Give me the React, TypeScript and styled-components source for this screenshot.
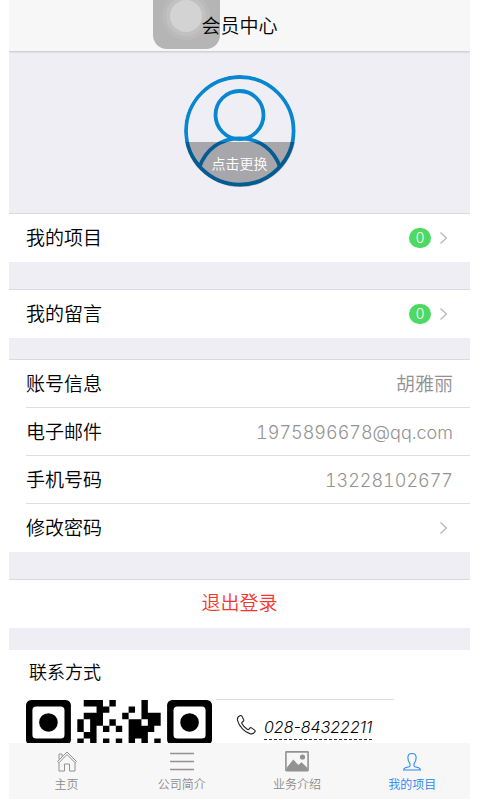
import React from "react";
import styled, { createGlobalStyle } from "styled-components";

const GlobalStyle = createGlobalStyle`
  * { box-sizing: border-box; }
  body {
    margin: 0;
    background: #fff;
    color: #000;
    font-family: Inter, "Noto Sans CJK SC", sans-serif;
    font-weight: 350;
  }
  button { font: inherit; color: inherit; background: none; border: 0; padding: 0; }
  a { color: inherit; text-decoration: none; }
  svg { display: block; flex: none; }
`;

const Page = styled.div`
  height: 100vh;
  padding: 0 10px 1px 9px;
  display: flex;
  flex-direction: column;
`;

const Header = styled.header`
  position: relative;
  z-index: 1;
  flex: none;
  height: 51px;
  display: flex;
  justify-content: center;
  background: #f7f7f7;
  box-shadow: 0 1px 2px #c4c4c6;
  clip-path: inset(0 0 -4px 0);
`;

const Title = styled.h1`
  position: relative;
  margin: 0;
  padding-top: 13px;
  font-size: 19px;
  line-height: 28px;
  font-weight: inherit;
`;

const AssistiveTouch = styled.button`
  position: absolute;
  top: -18px;
  left: calc(50% - 87px);
  width: 67px;
  height: 67px;
  border-radius: 14px;
  background: #b5b5b5;
  display: grid;
  place-items: center;
`;

const Content = styled.main`
  flex: 1;
  min-height: 0;
  overflow: hidden;
  background: #efeef4;
`;

const Profile = styled.section`
  height: 162px;
  padding-top: 24px;
  display: flex;
  justify-content: center;
`;

const Avatar = styled.button`
  position: relative;
  width: 112px;
  height: 112px;
  border-radius: 50%;
  overflow: hidden;
`;

const AvatarCaption = styled.span`
  position: absolute;
  left: 0;
  right: 0;
  bottom: 0;
  height: 45px;
  padding-top: 12px;
  background: rgba(0, 0, 0, 0.3);
  color: #fff;
  font-size: 14px;
  line-height: 20px;
`;

const Group = styled.ul<{ $gap: number }>`
  list-style: none;
  margin: 0 0 ${(p) => p.$gap}px;
  padding: 0;
  background: #fff;
  border-top: 1px solid #d9d9de;
`;

const Row = styled.li`
  height: 48px;
  margin-left: 17px;
  padding-right: 17px;
  display: flex;
  align-items: center;
  font-size: 19px;
  &:not(:last-child) { border-bottom: 1px solid #dedede; }
`;

const RowLink = styled.a`
  flex: 1;
  display: flex;
  align-items: center;
`;

const Label = styled.span`
  flex: 1;
  padding-top: 2px;
  line-height: 28px;
`;

const Value = styled.span<{ $numeric?: boolean }>`
  padding-top: 2px;
  color: #929292;
  font-size: ${(p) => (p.$numeric ? 18 : 19)}px;
  font-variant-numeric: tabular-nums;
  line-height: 28px;
`;

const Badge = styled.span`
  width: 22px;
  height: 20px;
  margin-right: 8px;
  border-radius: 10px;
  background: #4cd964;
  color: #fff;
  font-size: 14px;
  line-height: 20px;
  text-align: center;
`;

const Logout = styled.button`
  display: block;
  width: 100%;
  height: 49px;
  margin-bottom: 22px;
  background: #fff;
  border-top: 1px solid #d9d9de;
  color: #f5352e;
  font-size: 19px;
  line-height: 28px;
`;

const Contact = styled.section`
  background: #fff;
  padding: 9px 17px 0;
`;

const ContactTitle = styled.h2`
  margin: 0 3px 13px;
  font-size: 18px;
  line-height: 28px;
  font-weight: inherit;
`;

const ContactBody = styled.div`
  display: flex;
  gap: 4px;
`;

const PhoneBox = styled.address`
  width: 178px;
  height: 186px;
  margin-top: -1px;
  padding: 14px 0 0 20px;
  border-top: 1px solid #dedede;
  display: flex;
  align-items: flex-start;
  gap: 7px;
`;

const PhoneLink = styled.a`
  padding-top: 1px;
  border-bottom: 1px dashed #333;
  font-size: 16px;
  line-height: 24px;
  font-style: italic;
`;

const TabBar = styled.nav`
  flex: none;
  height: 56px;
  display: grid;
  grid-template-columns: repeat(4, 1fr);
  background: #f7f7f7;
`;

const Tab = styled.a<{ $active?: boolean }>`
  display: flex;
  flex-direction: column;
  align-items: center;
  padding-top: 7px;
  gap: 3px;
  color: ${(p) => (p.$active ? "#2485f5" : "#8a8a8a")};
  font-size: 12px;
  line-height: 18px;
`;

const Chevron = () => (
  <svg width="14" height="14" viewBox="0 0 14 14" fill="none" stroke="#b8b8b8" strokeWidth="1.3">
    <path d="M1.500 1.500l6 5.500-6 5.500" />
  </svg>
);

const Person = () => (
  <svg width="112" height="112" viewBox="0 0 112 112" fill="none" stroke="#0786d1" strokeWidth="3.8">
    <circle cx="55.8" cy="55.8" r="53.8" />
    <circle cx="55.500" cy="40" r="24" />
    <path d="M15.500 92C21.500 75 36 63.3 55.800 63.3S90 75 96 92" />
  </svg>
);

const QR_ROWS = [
  ".###.#....#..",
  "...##...#.#..",
  ".###...#..###",
  "#.##.#..##.##",
  "#.#.#.#.####.",
  ".##.....###..",
  "#.#.#.#.#.#.#",
];

const QR_PATH = QR_ROWS.map((row, y) =>
  [...row].map((c, x) => (c === "#" ? `M${x + 8} ${y}h1v1h-1z` : "")).join("")
).join("");

const Finder = ({ x }: { x: number }) => (
  <g transform={`translate(${x} 0)`}>
    <rect width="7" height="7" rx="0.8" />
    <rect x="1" y="1" width="5" height="5" rx="0.6" fill="#fff" />
    <circle cx="3.5" cy="3.5" r="1.45" />
  </g>
);

const QrCode = () => (
  <svg width="186" height="186" viewBox="0 0 29 29" role="img" aria-label="QR">
    <Finder x={0} />
    <Finder x={22} />
    <path d={QR_PATH} />
  </svg>
);

const Phone = () => (
  <svg width="21" height="22" viewBox="0 0 21 22" fill="none" stroke="#222" strokeWidth="1.1" strokeLinejoin="round">
    <path d="M4.4 1.5C2.3 2.2 1 4 1.6 6.6C3 12 8.5 18 13.8 19.6c2.600.7 4.400-.2 5.300-2 .3-.7.1-1.100-.4-1.500l-3.200-2.200c-.7-.5-1.200-.4-1.700.2l-1 1.200c-.5.5-1 .4-1.600 0C9 14 7 11.800 5.900 9.600c-.3-.6-.3-1 .2-1.400l1.200-.9c.6-.5.7-1 .3-1.700L5.800 2.100c-.3-.6-.7-.8-1.400-.6z" />
  </svg>
);

const HomeIcon = () => (
  <svg width="24" height="23" viewBox="0 0 24 23" fill="none" stroke="#929292" strokeWidth="1">
    <path d="M2.500 11.500L12 2l9.500 9.500-1.300 1.300L12 4.600l-8.200 8.200zM4 9.400V4h3v2.600M4 12.500V21h5.500v-7h5v7H20v-8.500" />
  </svg>
);

const MenuIcon = () => (
  <svg width="24" height="23" viewBox="0 0 24 23" stroke="#929292" strokeWidth="1.3">
    <path d="M0 3.500h24M0 11.500h24M0 19.500h24" />
  </svg>
);

const PictureIcon = () => (
  <svg width="24" height="23" viewBox="0 0 24 23">
    <rect x="0.900" y="1.900" width="22.200" height="18.700" rx="0.500" fill="none" stroke="#929292" strokeWidth="1.600" />
    <path d="M1.500 18l6.800-8.500 5 5.500 3.200-2.800 6 5.800v2.500h-21z" fill="#929292" />
    <circle cx="17.500" cy="7" r="2.600" fill="#929292" />
  </svg>
);

const MemberIcon = () => (
  <svg width="24" height="23" viewBox="0 0 24 23" fill="none" stroke="#2b8cf5" strokeWidth="1.100" strokeLinejoin="round">
    <path d="M10 13.700C8.600 12 7.800 9.500 7.900 7.200 8 4.800 9.700 3.500 12 3.500s4 1.300 4.100 3.700c.1 2.300-.7 4.800-2.100 6.500v1.800c0 .6.300.9.900 1.200l3.700 1.100c1.200.4 1.700 1 1.900 2.200h-17c.2-1.200.7-1.800 1.900-2.200l3.700-1.100c.6-.3.9-.6.9-1.200z" />
  </svg>
);

export default function App() {
  return (
    <>
      <GlobalStyle />
      <Page>
        <Header>
          <AssistiveTouch aria-label="AssistiveTouch">
            <svg width="50" height="50" viewBox="0 0 50 50">
              <circle cx="25" cy="25" r="24" fill="#bababa" />
              <circle cx="25" cy="25" r="20" fill="#c1c1c1" />
              <circle cx="25" cy="25" r="16" fill="#d3d3d3" />
            </svg>
          </AssistiveTouch>
          <Title>会员中心</Title>
        </Header>
        <Content>
          <Profile>
            <Avatar>
              <Person />
              <AvatarCaption>点击更换</AvatarCaption>
            </Avatar>
          </Profile>
          <Group $gap={27}>
            <Row>
              <RowLink href="#projects"><Label>我的项目</Label><Badge>0</Badge><Chevron /></RowLink>
            </Row>
          </Group>
          <Group $gap={21}>
            <Row>
              <RowLink href="#messages"><Label>我的留言</Label><Badge>0</Badge><Chevron /></RowLink>
            </Row>
          </Group>
          <Group $gap={27}>
            <Row><Label>账号信息</Label><Value>胡雅丽</Value></Row>
            <Row><Label>电子邮件</Label><Value $numeric>1975896678@qq.com</Value></Row>
            <Row><Label>手机号码</Label><Value $numeric>13228102677</Value></Row>
            <Row><RowLink href="#password"><Label>修改密码</Label><Chevron /></RowLink></Row>
          </Group>
          <Logout>退出登录</Logout>
          <Contact>
            <ContactTitle>联系方式</ContactTitle>
            <ContactBody>
              <QrCode />
              <PhoneBox>
                <Phone />
                <PhoneLink href="tel:028-84322211">028-84322211</PhoneLink>
              </PhoneBox>
            </ContactBody>
          </Contact>
        </Content>
        <TabBar>
          <Tab href="#home"><HomeIcon />主页</Tab>
          <Tab href="#about"><MenuIcon />公司简介</Tab>
          <Tab href="#services"><PictureIcon />业务介绍</Tab>
          <Tab href="#member" $active aria-current="page"><MemberIcon />我的项目</Tab>
        </TabBar>
      </Page>
    </>
  );
}
